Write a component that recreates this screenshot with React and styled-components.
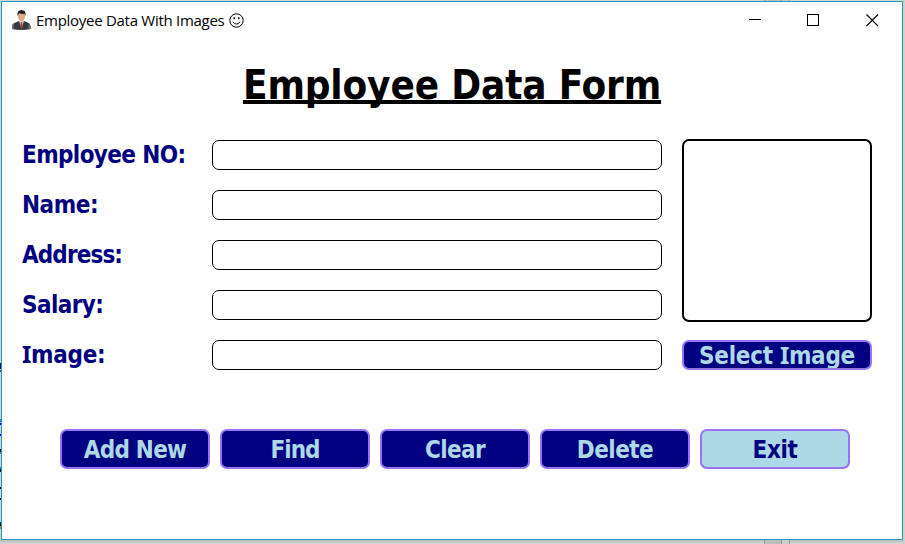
import React from 'react';
import styled, { createGlobalStyle } from 'styled-components';

const GlobalStyle = createGlobalStyle`
  *, *::before, *::after { box-sizing: border-box; }
  body { margin: 0; overflow: hidden; background: #d8d8d8; }
`;

const Desktop = styled.div`
  display: flex;
  height: 544px;
  padding: 1px 2px 4px 1px;
  background:
    linear-gradient(#8a3038, #8a3038) 0 370px / 1px 2px no-repeat,
    linear-gradient(#000080, #000080) 0 363px / 1px 6px no-repeat,
    linear-gradient(#2080f0, #2080f0) 0 419px / 1px 3px no-repeat,
    linear-gradient(#0000e0, #0000e0) 0 423px / 1px 2px no-repeat,
    linear-gradient(#0000f0, #0000f0) 0 434px / 1px 2px no-repeat,
    linear-gradient(#201000 60%, #2090d0 60%) 0 449px / 1px 5px no-repeat,
    linear-gradient(#2090d0 40%, #101010 40%) 0 467px / 1px 5px no-repeat,
    linear-gradient(#000, #000) 0 487px / 1px 2px no-repeat,
    linear-gradient(#000, #000) 0 498px / 1px 2px no-repeat,
    linear-gradient(#104080 20%, #201000 20% 60%, #c07020 60%) 0 522px / 1px 7px no-repeat,
    linear-gradient(90deg, #999 1px, #bdbdbd 1px 17px, #999 17px 18px, #ccc 18px 25px, #999 25px) 764px 0 / 26px 100% no-repeat,
    linear-gradient(90deg, #c8c8c8, #d4d4d4) 903px 0 / 2px 100% no-repeat,
    linear-gradient(#bcbcbc, #d6d6d6) 0 540px / 100% 4px no-repeat,
    #d4d4d4;
`;

const Window = styled.div`
  flex: 1;
  display: flex;
  flex-direction: column;
  background: #fff;
  border: 1px solid #1d9cb9;
`;

const TitleBar = styled.header`
  display: flex;
  align-items: center;
  height: 36px;
  padding: 0 23px 0 9px;
`;

const Caption = styled.span`
  margin: 0 5px 0 4px;
  font: 15px/20px "Open Sans", sans-serif;
  letter-spacing: -0.28px;
  color: #000;
  white-space: nowrap;
`;

const WindowControls = styled.div`
  display: flex;
  align-items: center;
  gap: 45px;
  margin-left: auto;
`;

const Glyph = styled.svg`
  display: block;
  flex: none;
`;

const Heading = styled.h1`
  margin: 0 0 9px;
  padding-top: 2px;
  text-align: center;
  font: bold 40px/91px "DejaVu Sans Condensed", "DejaVu Sans", sans-serif;
  letter-spacing: -0.15px;
  color: #000;
  text-decoration: underline;
  text-decoration-thickness: 4px;
  text-underline-offset: 1px;
  text-decoration-skip-ink: none;
`;

const Form = styled.form`
  display: flex;
  gap: 20px;
  padding-left: 20px;
`;

const Fields = styled.div`
  display: flex;
  flex-direction: column;
  gap: 20px;
`;

const Field = styled.label`
  display: grid;
  grid-template-columns: 190px 450px;
  height: 30px;
`;

const FieldName = styled.span`
  font: bold 24px/30px "DejaVu Sans Condensed", "DejaVu Sans", sans-serif;
  letter-spacing: ${(p) => p.$tracking}px;
  color: #000080;
  white-space: nowrap;
`;

const BarredCapital = styled.span`
  font-family: "Noto Sans", sans-serif;
  line-height: 0;
`;

const Input = styled.input`
  width: 100%;
  height: 30px;
  padding: 0 8px;
  border: 1px solid #000;
  border-radius: 7px;
  background: #fff;
  font: 18px "Noto Sans", sans-serif;
  outline: none;
`;

const PhotoColumn = styled.div`
  display: flex;
  flex-direction: column;
  justify-content: space-between;
  width: 190px;
  margin-top: -1px;
`;

const Photo = styled.div`
  height: 183px;
  border: 2px solid #000;
  border-radius: 7px;
`;

const Button = styled.button`
  width: ${(p) => p.$width}px;
  height: ${(p) => p.$height}px;
  padding: 2px 0 0;
  overflow: hidden;
  border: 2px solid #9873f6;
  border-radius: 7px;
  background: ${(p) => (p.$light ? '#add8e6' : '#000080')};
  color: ${(p) => (p.$light ? '#000080' : '#add8e6')};
  font: bold 24px/24px "DejaVu Sans Condensed", "DejaVu Sans", sans-serif;
  letter-spacing: ${(p) => p.$tracking}px;
  white-space: nowrap;
`;

const Actions = styled.div`
  display: flex;
  gap: 10px;
  margin: 59px 0 0 58px;
`;

const FIELDS = [
  { name: 'Employee NO:', tracking: -0.62 },
  { name: 'Name:', tracking: -0.45 },
  { name: 'Address:', tracking: -0.9 },
  { name: 'Salary:', tracking: -0.6 },
  { name: 'Image:', tracking: -0.3 },
];

const ACTIONS = [
  { name: 'Add New', tracking: -0.75 },
  { name: 'Find', tracking: -1 },
  { name: 'Clear', tracking: -0.6 },
  { name: 'Delete', tracking: -0.55 },
  { name: 'Exit', tracking: -0.35, light: true },
];

// Sets every capital I in the face whose I carries crossbars.
const Wording = ({ text }) =>
  text.split(/(I)/).map((part, i) => (part === 'I' ? <BarredCapital key={i}>I</BarredCapital> : part));

const EmployeeIcon = () => (
  <Glyph width="21" height="22" viewBox="0 0 21 22">
    <path d="M1 20V17.5Q1 14.5 4.5 13.5L8 12H13L16.5 13.5Q19.5 14.5 19.5 17.5V20Q10 22 1 20Z" fill="#333b42" />
    <path d="M1 20V17.5Q1 15.5 3 14.5V20.5ZM19.5 20V17.5Q19.5 15.5 17.5 14.5V20.5Z" fill="#657079" />
    <path d="M8 11.8L10.5 19L13 11.8Z" fill="#e8edf0" />
    <path d="M9.8 13H11.2L11.6 18L10.5 20.5L9.4 18Z" fill="#b5362a" />
    <path d="M7 5Q7 2.5 10.5 2.5T14 5V8Q13 12.5 10.5 12.8Q8 12.5 7 8Z" fill="#e2ab86" />
    <path d="M6.5 7Q5.6 1 10.5 1Q15.4 1 14.5 7L13.6 5Q10 5.3 8 4.3Z" fill="#24221f" />
  </Glyph>
);

const Smiley = () => (
  <Glyph width="15" height="15" viewBox="0 0 15 15" fill="none" stroke="#000">
    <circle cx="7.5" cy="7.5" r="6.7" />
    <path d="M3.8 8.7Q7.5 13.5 11.2 8.7" />
    <path d="M5.3 4.2V6.2M9.7 4.2V6.2" strokeWidth="1.5" />
  </Glyph>
);

export default function App() {
  return (
    <>
      <GlobalStyle />
      <Desktop>
        <Window>
          <TitleBar>
            <EmployeeIcon />
            <Caption>Employee Data With Images</Caption>
            <Smiley />
            <WindowControls>
              <Glyph width="13" height="13" viewBox="0 0 13 13">
                <path d="M0 5.5H12" stroke="#000" />
              </Glyph>
              <Glyph width="14" height="13" viewBox="0 0 14 13">
                <rect x="0.5" y="0.5" width="11" height="11" fill="none" stroke="#000" />
              </Glyph>
              <Glyph width="13" height="13" viewBox="0 0 13 13">
                <path d="M0.5 0.5L12 12M12 0.5L0.5 12" stroke="#000" strokeWidth="1.1" />
              </Glyph>
            </WindowControls>
          </TitleBar>
          <Heading>Employee Data Form</Heading>
          <Form>
            <Fields>
              {FIELDS.map((f) => (
                <Field key={f.name}>
                  <FieldName $tracking={f.tracking}><Wording text={f.name} /></FieldName>
                  <Input type="text" />
                </Field>
              ))}
            </Fields>
            <PhotoColumn>
              <Photo />
              <Button type="button" $width={190} $height={30} $tracking={-0.3}>
                <Wording text="Select Image" />
              </Button>
            </PhotoColumn>
          </Form>
          <Actions>
            {ACTIONS.map((a) => (
              <Button key={a.name} type="button" $width={150} $height={40} $tracking={a.tracking} $light={a.light}>
                {a.name}
              </Button>
            ))}
          </Actions>
        </Window>
      </Desktop>
    </>
  );
}
